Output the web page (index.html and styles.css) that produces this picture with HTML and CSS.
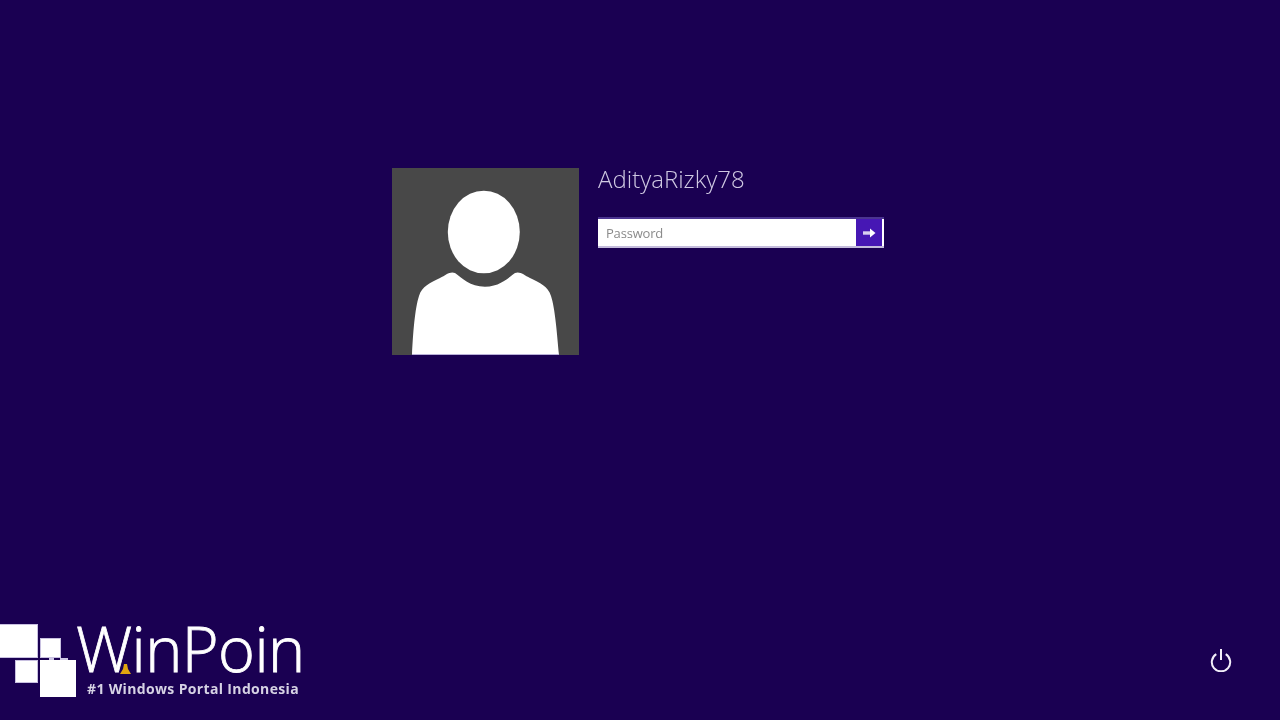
FILE: index.html
```html
<!DOCTYPE html>
<html lang="en">
<head>
<meta charset="utf-8">
<title>Sign in</title>
<link rel="stylesheet" href="styles.css">
</head>
<body>
<div class="screen">
  <main class="signin">
    <svg class="avatar" viewBox="0 0 187 187" width="187" height="187">
      <rect width="187" height="187" fill="#484848"/>
      <ellipse cx="91.8" cy="64" rx="36" ry="41.3" fill="#fff"/>
      <path d="M20 187 C21 165 23 140 27 128 C30 118 38 115 48 110 C54 107 58 103 63 105 C70 110 78 118.7 93 118.7 C108 118.7 116 110 123 105 C128 103 132 107 138 110 C148 115 156 118 159 128 C163 140 165 165 167 187 Z" fill="#fff"/>
      <rect x="20" y="186" width="147" height="1" fill="#b9b0d8"/>
    </svg>
    <div class="credentials">
      <div class="username">AdityaRizky78</div>
      <div class="password">
        <span class="placeholder">Password</span>
        <span class="submit">
          <svg viewBox="0 0 13 10" width="13" height="10"><path d="M0 5H8" stroke="#d8cff0" stroke-width="3.4" fill="none"/><path d="M7 0.5 L12.5 5 L7 9.5 Z" fill="#fff"/></svg>
        </span>
      </div>
    </div>
  </main>
  <footer class="bottom">
    <div class="logo">
      <svg class="logo-mark" viewBox="0 0 76 73" width="76" height="73">
        <g fill="#fff" stroke="#c8c0e0" stroke-width="1">
          <rect x="-1" y="0.5" width="38.5" height="33"/>
          <rect x="40.5" y="14.5" width="20" height="19"/>
          <rect x="15.5" y="36.5" width="22" height="22"/>
        </g>
        <rect x="40" y="36" width="36" height="37" fill="#fff"/>
        <rect x="49" y="34" width="5" height="2" fill="#cfc8e6"/>
        <rect x="60" y="34" width="8" height="2" fill="#cfc8e6"/>
      </svg>
      <div class="logo-text">
        <div class="logo-name">WinPoin</div>
        <div class="logo-tag">#1 Windows Portal Indonesia</div>
      </div>
      <svg class="logo-warn" viewBox="0 0 11 10" width="11" height="10"><path d="M4 0 H7 L8 5 L11 10 H0 L3 5 Z" fill="#e0a50f"/></svg>
    </div>
    <svg class="power" viewBox="0 0 24 24" width="24" height="24">
      <path d="M7.3 6.2 A9.2 9.2 0 1 0 16.7 6.2" fill="none" stroke="#f2eef9" stroke-width="2"/>
      <path d="M12 1V12" fill="none" stroke="#f2eef9" stroke-width="2"/>
    </svg>
  </footer>
</div>
</body>
</html>
```
FILE: styles.css
```css
html, body {
  margin: 0;
  padding: 0;
  background: #1a0052;
}
.screen {
  width: 1280px;
  height: 720px;
  overflow: hidden;
  display: flex;
  flex-direction: column;
  justify-content: space-between;
  filter: blur(0.4px);
}
.signin {
  display: flex;
  gap: 19px;
  padding: 168px 0 0 392px;
}
.avatar {
  display: block;
  flex: none;
}
.credentials {
  width: 286px;
  display: flex;
  flex-direction: column;
  gap: 18px;
}
.username {
  font-family: "Open Sans", sans-serif;
  font-weight: 300;
  font-size: 24px;
  line-height: 22px;
  height: 31px;
  color: #cfc8e2;
  white-space: nowrap;
}
.password {
  box-sizing: border-box;
  height: 31px;
  display: flex;
  align-items: stretch;
  justify-content: space-between;
  background: #fff;
  border-top: 2px solid #4b3490;
  border-bottom: 2px solid #c4bcdc;
  padding-right: 2px;
}
.placeholder {
  font-family: "Open Sans", sans-serif;
  font-size: 13px;
  letter-spacing: -0.2px;
  line-height: 28px;
  color: #8a8a8a;
  padding-left: 8px;
}
.submit {
  width: 26px;
  background: #4617b4;
  display: flex;
  align-items: center;
  justify-content: center;
}
.bottom {
  display: flex;
  justify-content: space-between;
  align-items: flex-end;
  padding: 0 47px 23px 0;
}
.logo {
  position: relative;
  display: flex;
  height: 73px;
}
.logo-mark {
  display: block;
  flex: none;
}
.logo-text {
  display: flex;
  flex-direction: column;
}
.logo-name {
  font-family: "Open Sans", sans-serif;
  font-weight: 300;
  font-size: 63px;
  line-height: 47px;
  margin-bottom: 9px;
  letter-spacing: -0.6px;
  -webkit-text-stroke: 0.8px #fff;
  color: #fff;
  white-space: nowrap;
}
.logo-tag {
  font-family: "Open Sans", sans-serif;
  font-weight: 700;
  font-size: 14px;
  line-height: 17px;
  letter-spacing: 0.35px;
  margin-left: 11px;
  color: #d6d2e4;
  white-space: nowrap;
}
.logo-warn {
  position: absolute;
  left: 120px;
  top: 40px;
}
.power {
  display: block;
  margin-bottom: 25px;
}
```
